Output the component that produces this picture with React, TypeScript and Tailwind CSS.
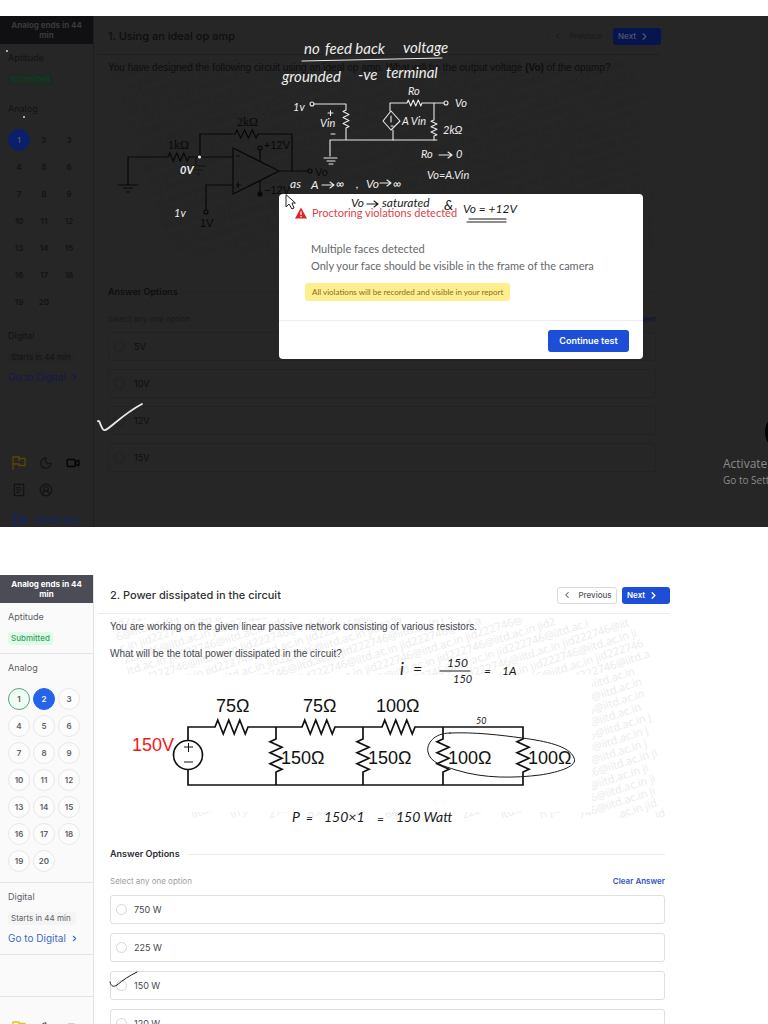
import type { ReactNode } from "react";
import { ChevronLeft, ChevronRight, CircleUserRound, LogOut, Moon, ReceiptText, Video } from "lucide-react";
import { clsx } from "clsx";

const questionNumbers = Array.from({ length: 20 }, (_, i) => i + 1);
const watermarkText = "jid222746@iitd.ac.in ".repeat(8);

// Each row runs along a line tilted by 18deg, kept inside the 555x200 box
const watermarkRows = Array.from({ length: 30 }, (_, i) => {
  const y = (i + 1) * 12;
  const start = Math.max(0, Math.round((0.95 * y - 200) / 0.31));
  const end = Math.min(3.08 * y, (555 - 0.31 * y) / 0.95);
  const from = (i * 8) % 21;
  const count = Math.max(0, Math.ceil((end - start) / 5.3));
  return { x: start, y, text: watermarkText.slice(from, from + count) };
});

// Zigzag for a resistor lying on a horizontal wire
function zigH(x: number, y: number, length: number, amp: number) {
  const step = length / 12;
  let d = `L${x} ${y}`;
  for (let i = 0; i < 6; i++) {
    d += ` L${x + step * (2 * i + 1)} ${y + (i % 2 ? amp : -amp)}`;
  }
  return `${d} L${x + length} ${y}`;
}

function zigV(x: number, y: number, length: number, amp: number) {
  const step = length / 12;
  let d = `L${x} ${y}`;
  for (let i = 0; i < 6; i++) {
    d += ` L${x + (i % 2 ? amp : -amp)} ${y + step * (2 * i + 1)}`;
  }
  return `${d} L${x} ${y + length}`;
}

function FlagIcon() {
  return (
    <svg viewBox="0 0 14 14" className="size-[14px]" fill="none" stroke="currentColor" strokeWidth="1.3">
      <path d="M1 14V1h6v1.5h6v7H7V8H1M7 2.5V5" />
    </svg>
  );
}

type SidebarProps = { dark?: boolean; current: number; done?: number };

function Sidebar({ dark, current, done }: SidebarProps) {
  const line = dark ? "border-[#252525]" : "border-[#e5e5e8]";
  return (
    <aside
      className={clsx(
        "w-[94px] shrink-0 border-r text-[9px] leading-3",
        dark ? "border-[#1f1f1f] bg-[#262626] text-[#131313]" : "border-[#e2e2e5] bg-[#fafafa] text-[#5d5f66]"
      )}
    >
      <div
        className={clsx(
          "h-7 px-2 pt-1 text-center text-[8px] leading-[10px] font-bold",
          dark ? "bg-[#101013] text-[#3a3a3c]" : "bg-[#4b4c55] text-white"
        )}
      >
        Analog ends in 44 min
      </div>

      <div className={clsx("border-b px-2 pt-2 pb-2", line)}>
        <p>Aptitude</p>
        <span
          className={clsx(
            "mt-[9px] block h-[13px] w-[45px] rounded-sm pl-[3px] text-[8px] leading-[13px] font-medium",
            dark ? "bg-[#202823] text-[#0c4020]" : "bg-[#dcfce7] text-[#3f9d62]"
          )}
        >
          Submitted
        </span>
      </div>

      <div className={clsx("border-b px-2 pt-2", dark ? "pb-2" : "pb-[10px]", line)}>
        <p>Analog</p>
        <div className="mt-[14px] grid w-[72px] grid-cols-3 gap-x-[3px] gap-y-[5px]">
          {questionNumbers.map((n) => (
            <button
              key={n}
              type="button"
              className={clsx(
                "flex size-[22px] items-center justify-center rounded-full border text-[8px] font-semibold",
                n === current && dark && "border-[#0b1f6b] bg-[#0b1f6b] text-[#4a5688]",
                n === current && !dark && "border-[#2563eb] bg-[#2563eb] text-white",
                n === done && "border-[#4fa777] bg-[#f0fdf4] text-[#4b5a50]",
                n !== current && n !== done && (dark ? "border-[#262626]" : "border-[#e8e8ea] bg-[#fcfcfc]")
              )}
            >
              {n}
            </button>
          ))}
        </div>
      </div>

      <div className={clsx("border-b px-2 pt-2 pb-[10px]", line)}>
        <p>Digital</p>
        <span
          className={clsx(
            "mt-[9px] block h-[13px] w-[68px] rounded-sm pl-[3px] text-[8px] leading-[13px] whitespace-nowrap",
            dark ? "bg-[#252525]" : "bg-[#f4f4f5]"
          )}
        >
          Starts in 44 min
        </span>
        <a
          href="#digital"
          className={clsx(
            "mt-[7px] flex items-center gap-1 text-[10px] whitespace-nowrap",
            dark ? "text-[#14194a]" : "text-[#4468c8]"
          )}
        >
          Go to Digital
          <ChevronRight className="size-[9px]" strokeWidth={3} />
        </a>
      </div>

      <div className={clsx("border-b", dark ? "h-[38px]" : "h-[42px]", line)} />

      <div className="px-3 pt-6">
        <div className="grid w-[68px] grid-cols-3 gap-[13px]">
          <button type="button" aria-label="Flag" className={dark ? "text-[#5a4608]" : "text-[#e3c316]"}>
            <FlagIcon />
          </button>
          <button type="button" aria-label="Theme">
            <Moon className="size-[14px]" />
          </button>
          <button type="button" aria-label="Camera" className={dark ? "text-[#050505]" : ""}>
            <Video className="size-[14px]" strokeWidth={2.5} />
          </button>
          <button type="button" aria-label="Notes">
            <ReceiptText className="size-[14px]" />
          </button>
          <button type="button" aria-label="Profile">
            <CircleUserRound className="size-[14px]" />
          </button>
        </div>
        <button
          type="button"
          className={clsx(
            "mt-[15px] flex items-center gap-[7px] text-[8px] font-medium whitespace-nowrap",
            dark ? "text-[#12246e]" : "text-[#1d4ed8]"
          )}
        >
          <LogOut className="size-4" strokeWidth={2.5} />
          Submit test
        </button>
      </div>
    </aside>
  );
}

type QuestionProps = {
  dark?: boolean;
  title: string;
  prompt: ReactNode;
  options: string[];
  children: ReactNode;
};

function Question({ dark, title, prompt, options, children }: QuestionProps) {
  const group = dark ? "q1" : "q2";
  return (
    <main className={clsx("min-w-0 flex-1", dark ? "pr-[107px] text-[#0e0e0e]" : "pr-[98px] text-[#45474d]")}>
      <header
        className={clsx(
          "flex h-[39px] items-center justify-between border-b pt-[2px]",
          dark ? "ml-[3px] border-[#202020] pl-[11px]" : "ml-1 border-[#ececee] pl-3"
        )}
      >
        <h1 className={clsx("text-[11px] font-medium", !dark && "text-[#303136]")}>{title}</h1>
        <div className="flex gap-[5px] text-[8px] leading-3 font-medium">
          <button
            type="button"
            className={clsx(
              "flex h-[17px] w-[60px] items-center justify-center gap-[6px] rounded-[3px] border",
              dark ? "border-[#242424] text-[#1c1c1c]" : "border-[#dadade] text-[#55575d]"
            )}
          >
            <ChevronLeft className="size-[10px]" strokeWidth={2.5} />
            Previous
          </button>
          <button
            type="button"
            className={clsx(
              "flex h-[17px] w-[48px] items-center gap-[3px] rounded-[3px] pl-[5px] font-semibold",
              dark ? "bg-[#07144f] text-[#4b5170]" : "bg-[#1d4ed8] text-white"
            )}
          >
            Next
            <ChevronRight className="size-[11px]" strokeWidth={3} />
          </button>
        </div>
      </header>

      <div className={clsx("relative mr-[5px]", dark ? "ml-[14px]" : "ml-4")}>
        <Watermark dark={dark} />
        <div className="relative pt-[6px] font-['Liberation_Sans',sans-serif] text-[10px] leading-[14px]">
          {prompt}
        </div>
        <div className="relative">{children}</div>

        <div className="mt-[35px] flex items-center gap-2">
          <h2 className={clsx("text-[9px] leading-[14px] font-semibold", !dark && "text-[#2c2d31]")}>
            Answer Options
          </h2>
          <span className={clsx("h-px flex-1", dark ? "bg-[#232323]" : "bg-[#ececee]")} />
        </div>
        <div className="mt-[14px] flex items-center justify-between text-[8px] leading-[13px]">
          <p className={dark ? "text-[#191919]" : "text-[#9c9ea4]"}>Select any one option</p>
          <button type="button" className={clsx("font-semibold", dark ? "text-[#11163a]" : "text-[#3554c4]")}>
            Clear Answer
          </button>
        </div>

        <div className={clsx("flex flex-col", dark ? "mt-[6px] gap-2" : "mt-[7px] gap-[9px]")}>
          {options.map((option) => (
            <label
              key={option}
              className={clsx(
                "flex h-[29px] items-center rounded-[3px] border pl-[5px] text-[9px]",
                dark ? "gap-[9px] border-[#222222]" : "gap-[7px] border-[#dfdfe2] bg-white"
              )}
            >
              <input
                type="radio"
                name={group}
                value={option}
                className={clsx(
                  "size-[11px] appearance-none rounded-full border",
                  dark ? "border-[#212121]" : "border-[#d6d6da]"
                )}
              />
              {option}
            </label>
          ))}
        </div>
      </div>
    </main>
  );
}

function Watermark({ dark }: { dark?: boolean }) {
  return (
    <svg
      aria-hidden="true"
      className="absolute top-1 left-0 h-[200px] w-full overflow-hidden font-['Open_Sans',sans-serif] text-[11px]"
      fill={dark ? "#242424" : "#ebebeb"}
    >
      <g transform="rotate(-18)">
        {watermarkRows.map((row) => (
          <text key={row.y} x={row.x} y={row.y}>
            {row.text}
          </text>
        ))}
      </g>
    </svg>
  );
}

function OpAmpCircuit() {
  return (
    <svg
      viewBox="108 75 480 175"
      className="h-[175px] w-[480px] font-['Liberation_Sans',sans-serif] text-[12px]"
      fill="none"
      stroke="#080808"
      strokeWidth="1.2"
    >
      <path d={`M128 185V157${zigH(168, 157, 21, 4)}H233M118 185h20M123 188h10M126 192h4`} />
      <path d={`M200 157V134${zigH(235, 134, 23, 4)}H292V171`} />
      <path d="M196 157v8M192 166h14M194 170h9M197 174h3" stroke="#151515" />
      <path d="M233 148v46l46-23zM279 171h29M260 150v11M260 181v11M233 185h-27v25" />
      <path d="M236 156h4M236 185h5M238 182v6" />
      <circle cx="260" cy="148" r="2" />
      <circle cx="260" cy="194" r="2" fill="#080808" />
      <circle cx="310" cy="171" r="2" />
      <circle cx="206" cy="212" r="2" />
      <g fill="#080808" stroke="none">
        <text x="168" y="149" className="font-['Liberation_Serif',serif]">1kΩ</text>
        <text x="237" y="126" className="font-['Liberation_Serif',serif]">2kΩ</text>
        <text x="264" y="149" className="text-[11px]">+12V</text>
        <text x="264" y="194" className="text-[11px]">−12V</text>
        <text x="315" y="176" className="text-[11px]">Vo</text>
        <text x="200" y="227" className="text-[11px]">1V</text>
      </g>
    </svg>
  );
}

function ResistorCircuit() {
  return (
    <svg
      viewBox="110 675 482 137"
      className="h-[137px] w-[482px] bg-white font-['Liberation_Sans',sans-serif] text-[18px]"
      fill="none"
      stroke="#111111"
      strokeWidth="1.7"
    >
      <path
        d={`M188 740V727${zigH(215, 727, 33, 7)}${zigH(302, 727, 33, 7)}${zigH(382, 727, 33, 7)}H523${zigV(523, 739, 33, 6)}V785H188V770`}
      />
      {[276, 363, 443].map((x) => (
        <path key={x} d={`M${x} 727${zigV(x, 739, 33, 6)}V785`} />
      ))}
      <circle cx="188" cy="755" r="14.5" />
      <path d="M184 747h9M188.500 743v9M184 762h9" strokeWidth="1" />
      <g fill="#111111" stroke="none">
        <text x="216" y="712">75Ω</text>
        <text x="303" y="712">75Ω</text>
        <text x="376" y="712">100Ω</text>
        <text x="281" y="764">150Ω</text>
        <text x="368" y="764">150Ω</text>
        <text x="448" y="764">100Ω</text>
        <text x="528" y="764">100Ω</text>
        <text x="132" y="751" fill="#f01818">150V</text>
      </g>
    </svg>
  );
}

// Tutor's pen notes over the op amp question
function OpAmpNotes() {
  return (
    <svg
      viewBox="0 16 768 511"
      className="pointer-events-none absolute top-0 left-0 h-[511px] w-[768px] font-['Lato',sans-serif] text-[11px] italic"
      fill="none"
      stroke="#e8e8e8"
      strokeWidth="1.1"
      strokeLinecap="round"
      strokeLinejoin="round"
    >
      <path d="M302 61L442 58" />
      <path d={`M314 104H346${zigV(346, 110, 18, 3)}V140M330 140H437M330 140V156M324 158h13M327 161h8M329 164h4`} />
      <path d={`M390 111V103${zigH(407, 103, 15, 3)}H444M434 103${zigV(434, 120, 16, 3)}V140`} />
      <path d="M391 111l9 10l-9 9l-8 -9zM393 130v10M391 116v6M391 126h2M328 113h5M330.500 110.500v5M331 134h4" />
      <circle cx="312" cy="104" r="2" />
      <circle cx="446" cy="103" r="2" />
      <path d="M439 155h13m-4 -3l4 3l-4 3M322 185h12m-4 -3l4 3l-4 3M380 183h11m-4 -3l4 3l-4 3" />
      <path d="M98 421c2 -1 3 8 6 9c3 2 17 -15 38 -26" strokeWidth="1.8" />
      <circle cx="199.500" cy="157" r="1" fill="#ffffff" />
      <circle cx="7" cy="51" r=".4" />
      <circle cx="24" cy="117" r=".4" />
      <g fill="#eeeeee" stroke="none">
        <g className="text-[15px]">
          <text x="304" y="54">no</text>
          <text x="325" y="54">feed back</text>
          <text x="403" y="53">voltage</text>
          <text x="282" y="82">grounded</text>
          <text x="358" y="80">-ve</text>
          <text x="386" y="78">terminal</text>
        </g>
        <text x="293" y="111">1v</text>
        <text x="320" y="127">Vin</text>
        <text x="408" y="95">Ro</text>
        <text x="455" y="107">Vo</text>
        <text x="402" y="125">A Vin</text>
        <text x="443" y="134">2kΩ</text>
        <text x="421" y="158">Ro</text>
        <text x="456" y="158">0</text>
        <text x="427" y="179">Vo=A.Vin</text>
        <g className="text-[12px]">
          <text x="290" y="188">as</text>
          <text x="311" y="189">A</text>
          <text x="336" y="188">∞</text>
          <text x="356" y="188">,</text>
          <text x="366" y="188">Vo</text>
          <text x="393" y="188">∞</text>
        </g>
        <text x="180" y="174" className="font-bold">0V</text>
        <text x="174" y="217">1v</text>
      </g>
      <g fill="#1c1c1c" stroke="none" className="text-[12px]">
        <text x="351" y="207">Vo</text>
        <text x="382" y="207">saturated</text>
        <text x="444" y="210" className="text-[14px]">&amp;</text>
        <text x="463" y="213">Vo = +12V</text>
      </g>
      <path d="M367 204h11m-4 -3l4 3l-4 3M469 219h37M467 222h39" stroke="#1c1c1c" />
      <path d="M286 195v12l3 -3l3 5l2 -1l-2 -5h3z" fill="#ffffff" stroke="#222222" strokeWidth="1" />
    </svg>
  );
}

function ResistorNotes() {
  return (
    <svg
      viewBox="0 575 768 449"
      className="pointer-events-none absolute top-0 left-0 h-[449px] w-[768px] font-['Lato',sans-serif] text-[12px] italic"
      fill="none"
      stroke="#1a1a1a"
      strokeWidth="1"
      strokeLinecap="round"
    >
      <path d="M450 733C434 733 426 744 428 752C430 763 444 766 456 770C485 779 515 778 540 775C560 772 578 766 574 758C570 746 545 741 522 738C500 735 475 732 450 733z" />
      <path d="M440 671h30M110 982c1 5 4 5 7 3c6 -5 12 -9 20 -13" />
      <g fill="#1a1a1a" stroke="none">
        <text x="400" y="675" className="text-[17px]">i</text>
        <text x="413" y="675" className="text-[16px]">=</text>
        <text x="447" y="667">150</text>
        <text x="453" y="683" className="text-[11px]">150</text>
        <text x="484" y="675">=</text>
        <text x="502" y="675">1A</text>
        <text x="476" y="724" className="text-[9px]">50</text>
        <text x="292" y="822" className="text-[14px]">P</text>
        <text x="306" y="822">=</text>
        <text x="324" y="822" className="text-[14px]">150×1</text>
        <text x="377" y="823">=</text>
        <text x="396" y="822" className="text-[14px]">150 Watt</text>
      </g>
    </svg>
  );
}

function ViolationDialog() {
  return (
    <div
      role="dialog"
      aria-labelledby="violation-title"
      className="absolute top-[178px] left-[279px] w-[364px] rounded-sm bg-white font-['Lato',sans-serif] text-[#66676b]"
    >
      <div className="px-4 pt-3 pb-[19px]">
        <div className="flex items-center gap-[5px]">
          <svg viewBox="0 0 12 12" className="size-3">
            <path d="M6 .5L12 11.500H0z" fill="#dc2626" />
            <path d="M6 4.500v3.500M6 9v1.200" stroke="#ffffff" strokeWidth="1.200" />
          </svg>
          <h2 id="violation-title" className="text-[11px] leading-[14px] text-[#d9444c]">
            Proctoring violations detected
          </h2>
        </div>
        <div className="mt-5 pl-4 text-[11px] leading-[17px]">
          <p>Multiple faces detected</p>
          <p>Only your face should be visible in the frame of the camera</p>
        </div>
        <p className="mt-[9px] ml-[10px] w-fit rounded-[3px] bg-[#fdef8e] px-[7px] text-[8px] leading-[18px] text-[#8d6a2c]">
          All violations will be recorded and visible in your report
        </p>
      </div>
      <div className="flex justify-end border-t border-[#ececee] pt-[9px] pr-[14px] pb-[7px]">
        <button
          type="button"
          className="h-[22px] w-[81px] rounded-[3px] bg-[#1d4ed8] font-['Inter',sans-serif] text-[9px] font-semibold text-white"
        >
          Continue test
        </button>
      </div>
    </div>
  );
}

export default function App() {
  return (
    <div className="h-screen overflow-hidden bg-white pt-4 font-['Inter',sans-serif]">
      <section className="relative flex h-[511px] overflow-hidden bg-[#262626]">
        <Sidebar dark current={1} />
        <Question
          dark
          title="1. Using an ideal op amp"
          prompt={
            <p className="whitespace-nowrap">
              You have designed the following circuit using an ideal op amp. What will be the output voltage{" "}
              <b>(Vo)</b> of the opamp?
            </p>
          }
          options={["5V", "10V", "12V", "15V"]}
        >
          <OpAmpCircuit />
        </Question>
        <ViolationDialog />
        <OpAmpNotes />
        <div className="absolute top-[440px] right-0 w-[45px] font-['Open_Sans',sans-serif] whitespace-nowrap text-[#8a8a8a]">
          <p className="text-[12px] leading-4">Activate</p>
          <p className="text-[10px] leading-4">Go to Sett</p>
        </div>
        <div className="absolute top-[396px] -right-[37px] size-10 rounded-full bg-black" />
      </section>

      <section className="relative mt-12 flex">
        <Sidebar current={2} done={1} />
        <Question
          title="2. Power dissipated in the circuit"
          prompt={
            <>
              <p>You are working on the given linear passive network consisting of various resistors.</p>
              <p className="mt-[13px] mb-[14px]">What will be the total power dissipated in the circuit?</p>
            </>
          }
          options={["750 W", "225 W", "150 W", "120 W"]}
        >
          <ResistorCircuit />
        </Question>
        <ResistorNotes />
      </section>
    </div>
  );
}
